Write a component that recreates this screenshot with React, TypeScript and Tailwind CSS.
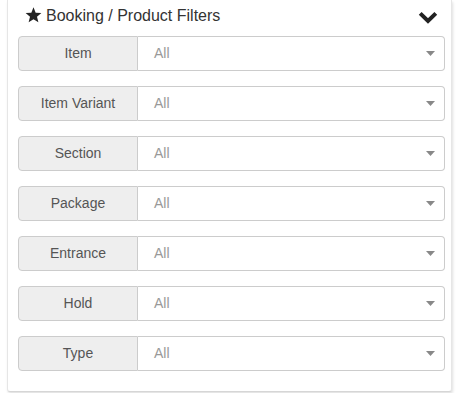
import React from "react";

const rows = ["Item", "Item Variant", "Section", "Package", "Entrance", "Hold", "Type"];

export default function App() {
  return (
    <div className="w-[460px] h-[393px] bg-white overflow-hidden" style={{ fontFamily: '"Liberation Sans", Arial, sans-serif' }}>
      <div className="ml-[7px] w-[445px] border-x border-b border-x-[#e6e6e6] border-b-[#d6d6d6] rounded-b-[3px] shadow-[1px_2px_3px_rgba(0,0,0,0.12)] bg-white pb-[20px]">
        <div className="h-[36px] flex items-center justify-between pl-[17px] pr-[13px]">
          <div className="flex items-center text-[16px] text-[#333] -mt-[5px]">
            <svg width="17" height="16" viewBox="0 0 24 23" className="mr-[4px] mb-[1px]">
              <path d="M12 0.5l3.1 7.6 8.2 0.6-6.3 5.3 2 8-7-4.4-7 4.4 2-8L0.7 8.7l8.2-0.6z" fill="#222" />
            </svg>
            <span>Booking / Product Filters</span>
          </div>
          <svg width="20" height="13" viewBox="0 0 20 13" className="-mt-[1px]">
            <path d="M2.2 2.4l7.8 7.6 7.8-7.6" fill="none" stroke="#222" strokeWidth="4" />
          </svg>
        </div>
        <div className="flex flex-col gap-[15px] pl-[10px] pr-[6px]">
          {rows.map((r) => (
            <div key={r} className="flex h-[35px] text-[14px]">
              <div className="w-[120px] flex items-center justify-center bg-[#eeeeee] border border-[#cccccc] rounded-l-[4px] text-[#555]">
                {r}
              </div>
              <div className="flex-1 flex items-center justify-between bg-white border border-l-0 border-[#cccccc] rounded-r-[4px] pl-[16px] pr-[8px] text-[#999]">
                <span>All</span>
                <svg width="9" height="5" viewBox="0 0 9 5" className="mr-[1px]">
                  <path d="M0 0h9L4.5 5z" fill="#888" />
                </svg>
              </div>
            </div>
          ))}
        </div>
      </div>
    </div>
  );
}
